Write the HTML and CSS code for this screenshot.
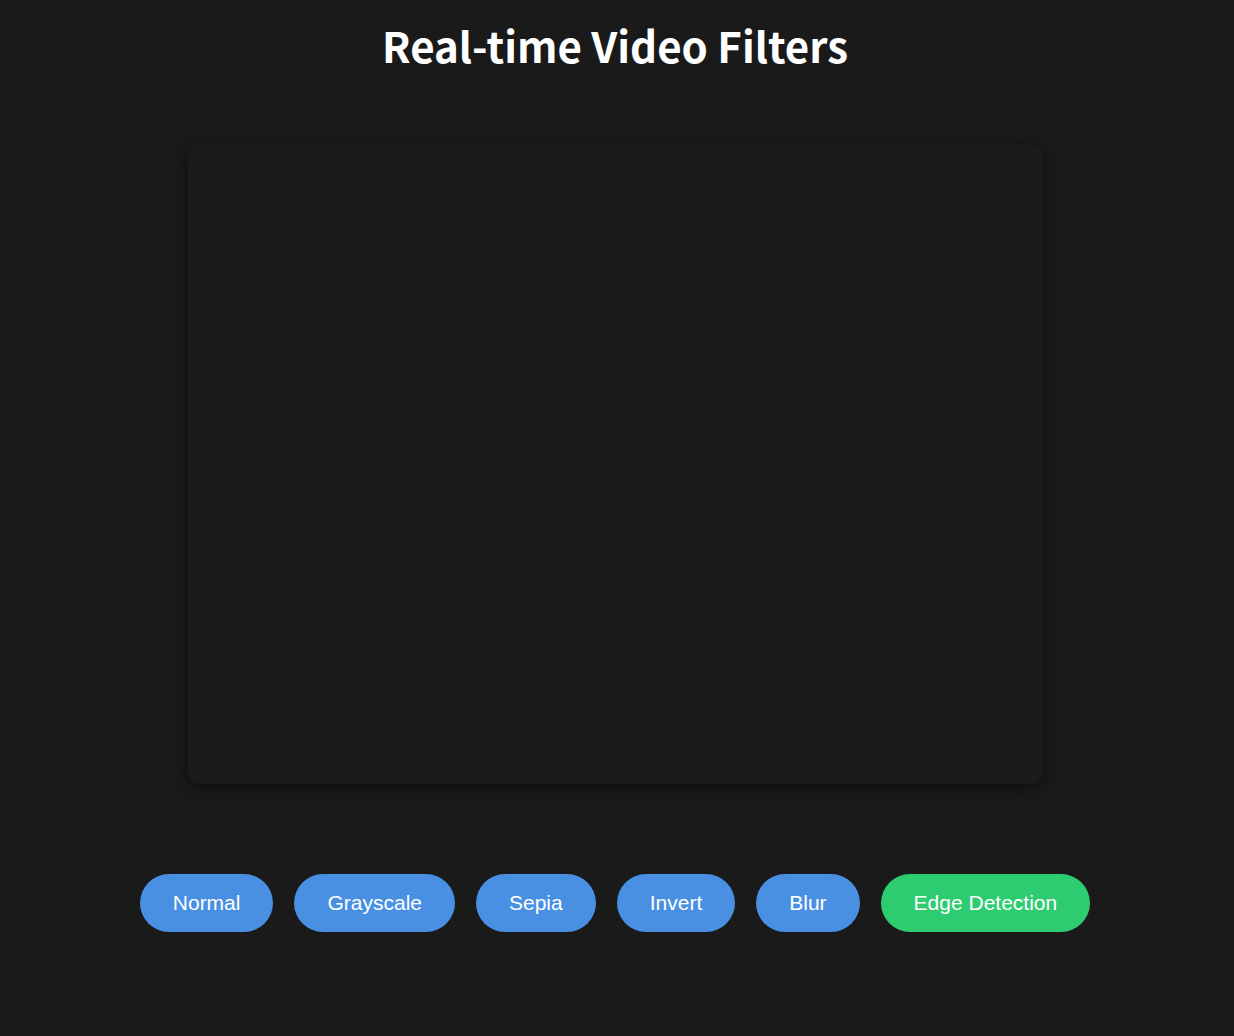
FILE: index.html
```html
<!doctype html>
<html>

<head>
    <title>Real-time Video Filters</title>
    <meta charset="utf-8" />
    <meta name="viewport" content="width=device-width, initial-scale=1.0">
    <link rel="stylesheet" href="styles.css">
</head>

<body>
    <h1>Real-time Video Filters</h1>
    <div id="stage">
        <canvas id="output" width="854" height="640"></canvas>
    </div>
    <div id="filters">
        <button class="filter">Normal</button>
        <button class="filter">Grayscale</button>
        <button class="filter">Sepia</button>
        <button class="filter">Invert</button>
        <button class="filter">Blur</button>
        <button class="filter active">Edge Detection</button>
    </div>
</body>

</html>
```

FILE: styles.css
```css
body { background-color: #1a1a1a; color: #fff; font-family: Arial, "Liberation Sans", sans-serif; margin: 0; padding-right: 4px; display: flex; flex-direction: column; align-items: center; }
h1 { font-family: "Noto Sans CJK KR", "Noto Sans", sans-serif; font-weight: 700; font-size: 42px; margin: 16px 0 0; line-height: 58px; }
#stage { margin-top: 70px; }
#output { display: block; width: 854px; height: 640px; background-color: #1b1b1b; border-radius: 12px; box-shadow: 0 4px 16px rgba(0, 0, 0, 0.45); }
#filters { display: flex; gap: 21px; margin-top: 90px; }
.filter { height: 58px; padding: 0 33px; border: 0; border-radius: 29px; background-color: #4a90e2; color: #fff; font-family: Arial, "Liberation Sans", sans-serif; font-size: 21px; cursor: pointer; }
.filter.active { background-color: #2ecc71; }
```
